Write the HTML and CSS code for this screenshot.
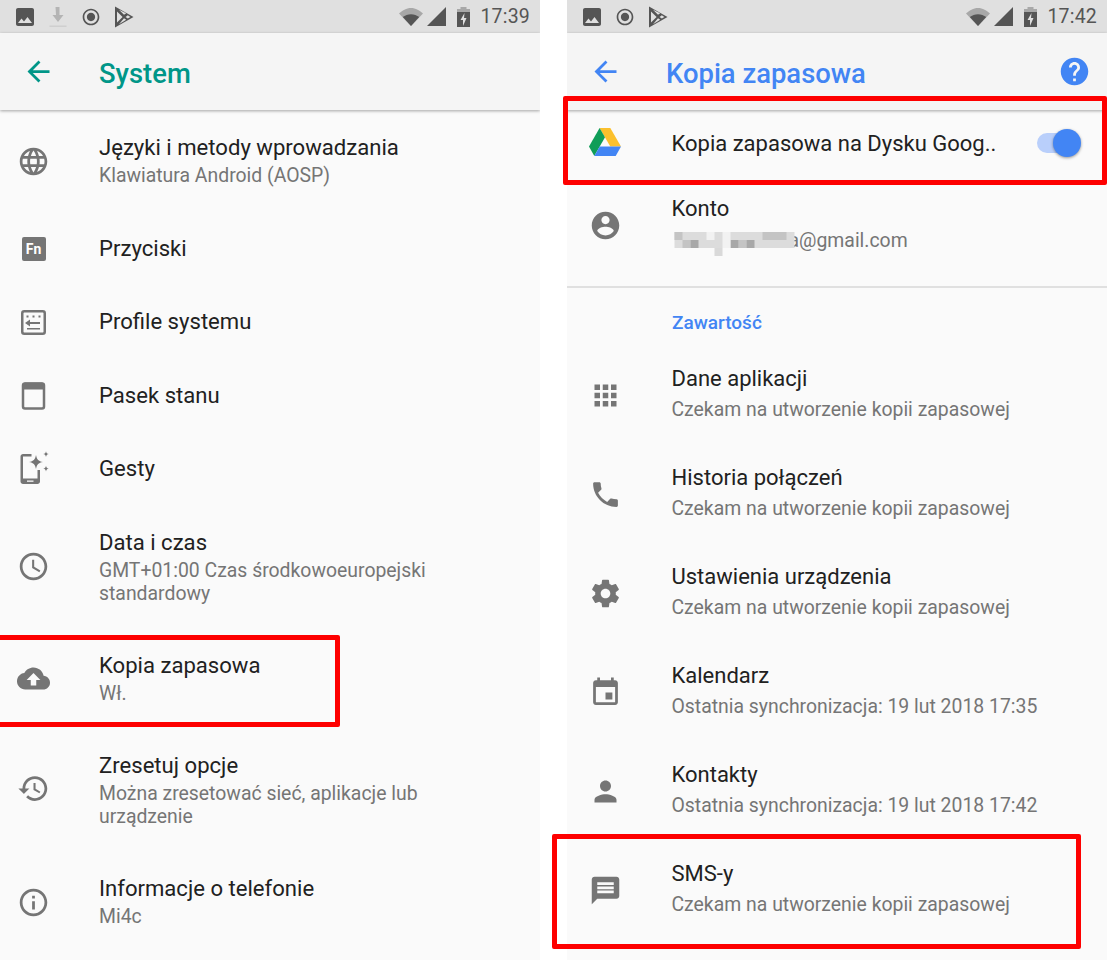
FILE: index.html
```html
<!DOCTYPE html>
<html lang="pl">
<head>
<meta charset="utf-8">
<title>System / Kopia zapasowa</title>
<link rel="stylesheet" href="styles.css">
</head>
<body>
<svg class="defs" width="0" height="0" aria-hidden="true">
  <symbol id="i-photo" viewBox="0 0 24 24"><path d="M21 19V5c0-1.100-.9-2-2-2H5c-1.100 0-2 .9-2 2v14c0 1.100.9 2 2 2h14c1.100 0 2-.9 2-2zM8.500 13.500l2.500 3.010L14.500 12l4.500 6H5l3.500-4.500z"/></symbol>
  <symbol id="i-radio" viewBox="0 0 24 24"><path d="M12 7c-2.760 0-5 2.240-5 5s2.240 5 5 5 5-2.240 5-5-2.240-5-5-5zm0-5C6.480 2 2 6.480 2 12s4.480 10 10 10 10-4.480 10-10S17.520 2 12 2zm0 18c-4.420 0-8-3.580-8-8s3.580-8 8-8 8 3.580 8 8-3.580 8-8 8z"/></symbol>
  <symbol id="i-play" viewBox="0 0 24 24"><path fill-rule="evenodd" d="M3 1.500 21.500 12 3 22.500zM5 6.500v11l5.600-5.500zM7 4.800l5 5 2.200-1.600zM7 19.200l7.200-4.400-2.200-1.600zM13.600 11.900l2.200 1.700 2.600-1.600-2.600-1.700z"/></symbol>
  <symbol id="i-signal" viewBox="0 0 19 19"><path d="M0 19 19 0v19z"/></symbol>
  <symbol id="i-back" viewBox="0 0 24 24"><path d="M20 11H7.830l5.590-5.590L12 4l-8 8 8 8 1.410-1.410L7.830 13H20v-2z"/></symbol>
  <symbol id="i-account" viewBox="0 0 24 24"><path d="M12 2C6.480 2 2 6.480 2 12s4.480 10 10 10 10-4.480 10-10S17.520 2 12 2zm0 3c1.660 0 3 1.340 3 3s-1.340 3-3 3-3-1.340-3-3 1.340-3 3-3zm0 14.200c-2.500 0-4.710-1.280-6-3.220.030-1.990 4-3.080 6-3.080 1.990 0 5.970 1.090 6 3.080-1.290 1.940-3.500 3.220-6 3.220z"/></symbol>
</svg>

<div class="page">
  <section class="phone">
    <div class="status">
      <div class="status-left">
        <svg class="st"><use href="#i-photo"/></svg>
        <svg class="st faded" viewBox="0 0 24 24"><path d="M9.500 2h4v8h4l-5.500 7-5.500-7h3.500z"/><path class="faded-line" d="M3.500 20.500h17v1.500h-17z"/></svg>
        <svg class="st st-sm"><use href="#i-radio"/></svg>
        <svg class="st"><use href="#i-play"/></svg>
      </div>
      <div class="status-right">
        <svg class="wifi" viewBox="0 0 24 18"><path class="wifi-bg" d="M0 5.500C3 2.500 7.500 0 12 0s9 2.500 12 5.500L12 18z"/><path d="M3.800 9C6 7.300 9 6.200 12 6.200s6 1.100 8.200 2.800L12 18z"/></svg>
        <svg class="signal"><use href="#i-signal"/></svg>
        <svg class="battery" viewBox="0 0 13 20"><path class="battery-top" d="M3.500 0h6v2h3.500v6H0V2h3.500z"/><path d="M0 5h13v15H0z"/><path class="bolt" d="M7.500 6 3.500 13h2.500v6l3.500-8H7z"/></svg>
        <span class="time">17:39</span>
      </div>
    </div>
    <header class="appbar">
      <svg class="back teal"><use href="#i-back"/></svg>
      <h1 class="title teal-text">System</h1>
    </header>
    <div class="list">
      <div class="row h-102">
        <svg class="ico" viewBox="0 0 24 24"><path d="M11.990 2C6.470 2 2 6.480 2 12s4.470 10 9.990 10C17.520 22 22 17.520 22 12S17.520 2 11.990 2zm6.930 6h-2.950c-.32-1.250-.78-2.450-1.380-3.560 1.840.63 3.370 1.910 4.330 3.560zM12 4.040c.83 1.200 1.480 2.530 1.910 3.960h-3.820c.43-1.430 1.080-2.760 1.910-3.960zM4.260 14C4.100 13.360 4 12.690 4 12s.1-1.360.26-2h3.380c-.08.66-.14 1.320-.14 2 0 .68.06 1.340.14 2H4.260zm.82 2h2.950c.32 1.250.78 2.450 1.380 3.560-1.840-.63-3.370-1.900-4.330-3.560zm2.950-8H5.080c.96-1.660 2.490-2.930 4.330-3.560C8.810 5.550 8.350 6.750 8.030 8zM12 19.960c-.83-1.200-1.480-2.530-1.910-3.960h3.820c-.43 1.430-1.080 2.760-1.910 3.960zM14.340 14H9.660c-.09-.66-.16-1.320-.16-2 0-.68.07-1.350.16-2h4.680c.09.65.16 1.320.16 2 0 .68-.07 1.340-.16 2zm.25 5.560c.6-1.110 1.060-2.310 1.380-3.560h2.950c-.96 1.650-2.490 2.930-4.330 3.560zM16.360 14c.08-.66.14-1.320.14-2 0-.68-.06-1.340-.14-2h3.380c.16.64.26 1.310.26 2s-.1 1.360-.26 2h-3.380z"/></svg>
        <div class="text"><div class="t">Języki i metody wprowadzania</div><div class="s">Klawiatura Android (AOSP)</div></div>
      </div>
      <div class="row h-74">
        <div class="ico-box"><span class="fn">Fn</span></div>
        <div class="text"><div class="t">Przyciski</div></div>
      </div>
      <div class="row h-74">
        <svg class="ico" viewBox="0 0 33 33"><rect x="5.250" y="5.250" width="22.500" height="22.500" rx="2" class="outline"/><path d="M9.500 9.500h2v2h-2zM15.500 9.500h2v2h-2zM21.500 9.500h2v2h-2zM12 16h11v2H12zM8 17l5-3.500v7z"/><path d="M10 22h13v1.500H10z"/></svg>
        <div class="text"><div class="t">Profile systemu</div></div>
      </div>
      <div class="row h-74">
        <svg class="ico" viewBox="0 0 33 33"><rect x="6" y="4.500" width="21" height="25" rx="2" class="outline"/><path d="M6 5.500c0-1 1-2 2-2h17c1 0 2 1 2 2v5H6z"/></svg>
        <div class="text"><div class="t">Pasek stanu</div></div>
      </div>
      <div class="row h-74">
        <svg class="ico ico-wide" viewBox="0 0 33 33"><path d="M6 1h8.500v2.500H6v22h14.500V17H23v11.500c0 1.500-1.200 2.500-2.500 2.500H6c-1.300 0-2.500-1-2.500-2.500V3.500C3.500 2 4.700 1 6 1z"/><path class="notch" d="M10 27.500h6.500v1.300H10z"/><path d="M19 2c.9 4.600 2.400 6.100 7 7-4.600.9-6.100 2.400-7 7-.9-4.600-2.400-6.100-7-7 4.600-.9 6.100-2.400 7-7z"/><path d="M29 -1.700c.4 1.900 1 2.500 2.800 2.800-1.800.4-2.400 1-2.800 2.800-.4-1.800-1-2.400-2.800-2.800 1.800-.3 2.400-.9 2.800-2.800zM29 12.800c.4 1.900 1 2.500 2.800 2.800-1.800.4-2.400 1-2.800 2.800-.4-1.800-1-2.400-2.800-2.800 1.800-.3 2.400-.9 2.800-2.800z"/></svg>
        <div class="text"><div class="t">Gesty</div></div>
      </div>
      <div class="row h-120">
        <svg class="ico" viewBox="0 0 24 24"><path d="M11.990 2C6.470 2 2 6.480 2 12s4.470 10 9.990 10C17.520 22 22 17.520 22 12S17.520 2 11.990 2zM12 20c-4.420 0-8-3.580-8-8s3.580-8 8-8 8 3.580 8 8-3.580 8-8 8zm.5-13H11v6l5.250 3.150.75-1.230-4.500-2.670z"/></svg>
        <div class="text low"><div class="t">Data i czas</div><div class="s">GMT+01:00 Czas środkowoeuropejski<br>standardowy</div></div>
      </div>
      <div class="row h-105">
        <svg class="ico" viewBox="0 0 24 24"><path d="M19.350 10.040C18.670 6.590 15.640 4 12 4 9.110 4 6.600 5.640 5.350 8.040 2.340 8.360 0 10.910 0 14c0 3.310 2.690 6 6 6h13c2.760 0 5-2.240 5-5 0-2.640-2.050-4.780-4.650-4.960zM14 13v4h-4v-4H7l5-5 5 5h-3z"/></svg>
        <div class="text"><div class="t">Kopia zapasowa</div><div class="s">Wł.</div></div>
      </div>
      <div class="row h-115">
        <svg class="ico" viewBox="0 0 24 24"><path d="M13 3c-4.970 0-9 4.030-9 9H1l3.890 3.890.07.14L9 12H6c0-3.870 3.130-7 7-7s7 3.130 7 7-3.130 7-7 7c-1.930 0-3.680-.79-4.940-2.060l-1.420 1.420C8.270 19.990 10.510 21 13 21c4.970 0 9-4.030 9-9s-4.030-9-9-9zm-1 5v5l4.280 2.540.72-1.210-3.500-2.080V8H12z"/></svg>
        <div class="text low"><div class="t">Zresetuj opcje</div><div class="s">Można zresetować sieć, aplikacje lub<br>urządzenie</div></div>
      </div>
      <div class="row h-112">
        <svg class="ico" viewBox="0 0 24 24"><path d="M11 17h2v-6h-2v6zm1-15C6.480 2 2 6.480 2 12s4.480 10 10 10 10-4.480 10-10S17.520 2 12 2zm0 18c-4.410 0-8-3.590-8-8s3.590-8 8-8 8 3.590 8 8-3.590 8-8 8zM11 9h2V7h-2v2z"/></svg>
        <div class="text"><div class="t">Informacje o telefonie</div><div class="s">Mi4c</div></div>
      </div>
    </div>
  </section>

  <section class="phone phone-right">
    <div class="status">
      <div class="status-left">
        <svg class="st"><use href="#i-photo"/></svg>
        <svg class="st st-sm"><use href="#i-radio"/></svg>
        <svg class="st"><use href="#i-play"/></svg>
      </div>
      <div class="status-right">
        <svg class="wifi" viewBox="0 0 24 18"><path class="wifi-bg" d="M0 5.500C3 2.500 7.500 0 12 0s9 2.500 12 5.500L12 18z"/><path d="M3.800 9C6 7.300 9 6.200 12 6.200s6 1.100 8.200 2.800L12 18z"/></svg>
        <svg class="signal"><use href="#i-signal"/></svg>
        <svg class="battery" viewBox="0 0 13 20"><path class="battery-top" d="M3.500 0h6v2h3.500v6H0V2h3.500z"/><path d="M0 5h13v15H0z"/><path class="bolt" d="M7.500 6 3.500 13h2.500v6l3.500-8H7z"/></svg>
        <span class="time">17:42</span>
      </div>
    </div>
    <header class="appbar">
      <svg class="back blue"><use href="#i-back"/></svg>
      <h1 class="title blue-text">Kopia zapasowa</h1>
      <svg class="help blue" viewBox="0 0 24 24"><path d="M12 2C6.480 2 2 6.480 2 12s4.480 10 10 10 10-4.480 10-10S17.520 2 12 2zm1 17h-2v-2h2v2zm2.070-7.750l-.9.92C13.450 12.900 13 13.500 13 15h-2v-.5c0-1.100.45-2.100 1.170-2.830l1.240-1.260c.37-.36.59-.86.59-1.410 0-1.100-.9-2-2-2s-2 .9-2 2H8c0-2.210 1.790-4 4-4s4 1.790 4 4c0 .88-.36 1.680-.93 2.250z"/></svg>
    </header>
    <div class="list">
      <div class="row h-66">
        <svg class="drive" viewBox="0 0 32 28"><path fill="#fbc02d" d="M10.600 0h10.700L32 18.500H21.300z"/><path fill="#0f9d58" d="M10.600 0 16 9.300 5.300 28 0 18.500z"/><path fill="#4285f4" d="M10.700 18.500H32L26.700 28H5.300z"/></svg>
        <div class="text text-drive"><div class="t">Kopia zapasowa na Dysku Goog..</div></div>
        <div class="toggle"><span class="track"></span><span class="thumb"></span></div>
      </div>
      <div class="row h-98">
        <svg class="ico"><use href="#i-account"/></svg>
        <div class="text text-konto"><div class="t">Konto</div><div class="s email"><svg class="mosaic" viewBox="0 0 120 24" aria-hidden="true"><path fill="#dcdcdc" d="M0 0h120v16H0z"/><path fill="#c4c4c4" d="M0 0h8v8H0zM8 8h8v8H8zM64 8h8v8h-8zM88 0h24v8H88z"/><path fill="#a8a8a8" d="M16 8h8v8h-8zM56 8h8v8h-8zM72 8h8v8h-8z"/><path fill="#d9d9d9" d="M40 16h8v8h-8z"/><path fill="#f2f2f2" d="M48 0h8v16h-8zM32 0h8v8h-8z"/></svg>a@gmail.com</div></div>
      </div>
      <div class="divider"></div>
      <div class="section">Zawartość</div>
      <div class="row h-99">
        <svg class="ico" viewBox="0 0 24 24"><path d="M4 8h4V4H4v4zm6 12h4v-4h-4v4zm-6 0h4v-4H4v4zm0-6h4v-4H4v4zm6 0h4v-4h-4v4zm6-10v4h4V4h-4zm-6 4h4V4h-4v4zm6 6h4v-4h-4v4zm0 6h4v-4h-4v4z"/></svg>
        <div class="text text-wide"><div class="t">Dane aplikacji</div><div class="s">Czekam na utworzenie kopii zapasowej</div></div>
      </div>
      <div class="row h-99">
        <svg class="ico" viewBox="0 0 24 24"><path d="M6.620 10.790c1.440 2.830 3.760 5.140 6.590 6.590l2.200-2.200c.27-.27.67-.36 1.020-.24 1.120.37 2.330.57 3.570.57.55 0 1 .45 1 1V20c0 .55-.45 1-1 1-9.390 0-17-7.610-17-17 0-.55.45-1 1-1h3.500c.55 0 1 .45 1 1 0 1.250.2 2.450.57 3.570.11.35.03.74-.25 1.020l-2.200 2.200z"/></svg>
        <div class="text text-wide"><div class="t">Historia połączeń</div><div class="s">Czekam na utworzenie kopii zapasowej</div></div>
      </div>
      <div class="row h-99">
        <svg class="ico" viewBox="0 0 24 24"><path d="M19.430 12.980c.04-.32.07-.64.07-.98s-.03-.66-.07-.98l2.110-1.650c.19-.15.24-.42.12-.64l-2-3.460c-.12-.22-.39-.3-.61-.22l-2.490 1c-.52-.4-1.080-.73-1.690-.98l-.38-2.650C14.460 2.180 14.250 2 14 2h-4c-.25 0-.46.18-.49.42l-.38 2.650c-.61.25-1.170.59-1.690.98l-2.490-1c-.23-.09-.49 0-.61.22l-2 3.460c-.13.22-.07.49.12.64l2.110 1.650c-.04.32-.07.65-.07.98s.03.66.07.98l-2.110 1.650c-.19.15-.24.42-.12.64l2 3.460c.12.22.39.3.61.22l2.490-1c.52.4 1.080.73 1.690.98l.38 2.650c.03.24.24.42.49.42h4c.25 0 .46-.18.49-.42l.38-2.650c.61-.25 1.170-.59 1.690-.98l2.490 1c.23.09.49 0 .61-.22l2-3.460c.12-.22.07-.49-.12-.64l-2.110-1.650zM12 15.500c-1.930 0-3.500-1.570-3.500-3.500s1.570-3.500 3.500-3.500 3.500 1.570 3.500 3.500-1.570 3.500-3.500 3.500z"/></svg>
        <div class="text text-wide"><div class="t">Ustawienia urządzenia</div><div class="s">Czekam na utworzenie kopii zapasowej</div></div>
      </div>
      <div class="row h-99">
        <svg class="ico" viewBox="0 0 24 24"><path d="M17 12h-5v5h5v-5zM16 1v2H8V1H6v2H5c-1.110 0-1.990.9-1.990 2L3 19c0 1.100.89 2 2 2h14c1.100 0 2-.9 2-2V5c0-1.100-.9-2-2-2h-1V1h-2zm3 18H5V8h14v11z"/></svg>
        <div class="text text-wide"><div class="t">Kalendarz</div><div class="s">Ostatnia synchronizacja: 19 lut 2018 17:35</div></div>
      </div>
      <div class="row h-99">
        <svg class="ico" viewBox="0 0 24 24"><path d="M12 12c2.210 0 4-1.790 4-4s-1.790-4-4-4-4 1.790-4 4 1.790 4 4 4zm0 2c-2.670 0-8 1.340-8 4v2h16v-2c0-2.660-5.330-4-8-4z"/></svg>
        <div class="text text-wide"><div class="t">Kontakty</div><div class="s">Ostatnia synchronizacja: 19 lut 2018 17:42</div></div>
      </div>
      <div class="row h-99">
        <svg class="ico" viewBox="0 0 24 24"><path d="M20 2H4c-1.100 0-1.990.9-1.990 2L2 22l4-4h14c1.100 0 2-.9 2-2V4c0-1.100-.9-2-2-2zm-2 12H6v-2h12v2zm0-3H6V9h12v2zm0-3H6V6h12v2z"/></svg>
        <div class="text text-wide"><div class="t">SMS-y</div><div class="s">Czekam na utworzenie kopii zapasowej</div></div>
      </div>
    </div>
  </section>

  <div class="mark mark-a"></div>
  <div class="mark mark-b"></div>
  <div class="mark mark-c"></div>
</div>
</body>
</html>
```

FILE: styles.css
```css
* { box-sizing: border-box; }
html, body { margin: 0; padding: 0; background: #fff; }
body { font-family: Roboto, "Noto Sans", sans-serif; overflow: hidden; }
.defs { position: absolute; }
.page { position: relative; display: flex; gap: 27px; width: 1107px; height: 960px; overflow: hidden; }
.phone { width: 540px; height: 960px; background: #fafafa; display: flex; flex-direction: column; overflow: hidden; flex: none; }

.status { height: 33px; background: #e0e0e0; display: flex; justify-content: space-between; align-items: center; padding: 0 10px 0 13px; flex: none; fill: #555; }
.status-left { display: flex; gap: 9px; align-items: center; }
.status-right { display: flex; align-items: center; }
.st { width: 24px; height: 24px; display: block; }
.st-sm { width: 20px; height: 20px; margin: 0 2px; }
.faded { fill: #b4b4b4; }
.faded-line { fill: #cfcfcf; }
.wifi { width: 24px; height: 18px; display: block; }
.wifi-bg { fill: #a8a8a8; }
.signal { width: 19px; height: 19px; margin-left: 4px; display: block; }
.battery { width: 13px; height: 20px; margin-left: 11px; display: block; }
.battery-top { fill: #a8a8a8; }
.bolt { fill: #e0e0e0; }
.time { font-size: 19.500px; line-height: 24px; color: #555; margin-left: 10px; padding-top: 1px; letter-spacing: .2px; }

.appbar { position: relative; z-index: 1; height: 77px; background: #f5f5f5; box-shadow: 0 1px 3px rgba(0,0,0,.35); display: flex; align-items: center; padding: 0 16px 0 22px; flex: none; }
.back { width: 33px; height: 33px; display: block; flex: none; }
.teal { fill: #009688; }
.blue { fill: #4285f4; }
.title { margin: 6px 0 0 44px; font-size: 27.400px; font-weight: 500; line-height: 33px; }
.teal-text { color: #009688; }
.blue-text { color: #4285f4; }
.help { width: 33px; height: 33px; margin-left: auto; display: block; }

.list { display: flex; flex-direction: column; padding-left: 17px; flex: none; fill: #757575; }
.phone-right .list { padding-left: 22px; }
.row { display: flex; align-items: center; gap: 49px; flex: none; }
.phone-right .row { gap: 49.500px; }
.h-66 { height: 66px; }
.h-74 { height: 73.500px; }
.h-98 { height: 98px; }
.h-99 { height: 99px; }
.h-102 { height: 102px; }
.h-105 { height: 105px; }
.h-112 { height: 112px; }
.h-115 { height: 115px; }
.h-120 { height: 120px; }
.ico { width: 33px; height: 33px; display: block; flex: none; }
.ico-box { width: 33px; height: 33px; display: flex; align-items: center; justify-content: center; flex: none; }
.ico-wide { overflow: visible; }
.notch { fill: #fafafa; }
.outline { fill: none; stroke: #757575; stroke-width: 2.500px; }
.fn { width: 24px; height: 24px; border-radius: 2px; background: #757575; color: #fff; font-size: 14px; font-weight: 700; display: flex; align-items: center; justify-content: center; }
.drive { width: 32px; height: 28px; display: block; flex: none; margin: -2px 1px 0 0; }
.text { min-width: 0; padding-bottom: 2px; }
.low { margin-top: 3px; }
.t { font-size: 22.100px; line-height: 28px; color: #212121; white-space: nowrap; }
.phone-right .t { font-size: 22px; padding-top: 1px; }
.s { font-size: 19.400px; line-height: 23px; color: #757575; margin-top: 3px; white-space: nowrap; }
.text-wide { margin-top: -6px; padding-bottom: 0; }
.text-wide .s { margin-top: 5px; }
.text-drive { padding-bottom: 0; }
.text-konto { padding-bottom: 0; }
.text-konto .s { margin-top: 6px; }
.email { display: flex; align-items: flex-start; }
.mosaic { width: 125px; height: 24px; margin: 3px -8px 0 0; display: block; position: relative; filter: blur(.6px); flex: none; }
.toggle { position: relative; width: 44px; height: 28px; margin-left: auto; margin-right: 27px; }
.track { position: absolute; left: 0; top: 4px; width: 38px; height: 20px; border-radius: 10px; background: #b9cffb; }
.thumb { position: absolute; left: 16px; top: 0; width: 28px; height: 28px; border-radius: 50%; background: #4285f4; box-shadow: 0 1px 3px rgba(0,0,0,.4); }
.divider { height: 2px; margin: 12px 0 0 -22px; background: #e0e0e0; flex: none; }
.section { height: 58px; margin-left: 83px; padding-top: 23px; font-size: 19px; line-height: 24px; font-weight: 500; color: #4285f4; flex: none; }

.mark { position: absolute; z-index: 2; border: 5px solid #fe0000; border-radius: 2px; pointer-events: none; }
.mark-a { left: -10px; top: 635px; width: 350px; height: 92px; }
.mark-b { left: 563px; top: 96px; width: 544px; height: 89px; }
.mark-c { left: 552px; top: 834px; width: 529px; height: 115px; }
```
